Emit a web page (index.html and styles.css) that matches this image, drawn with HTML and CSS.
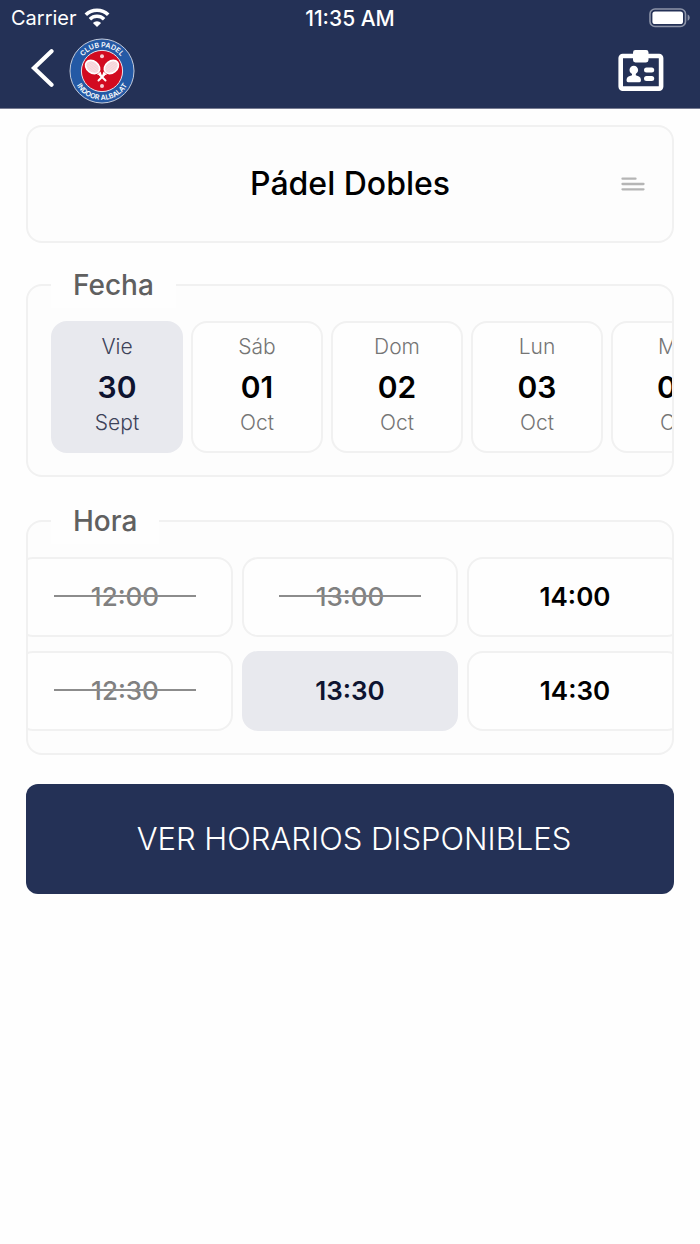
FILE: index.html
```html
<!DOCTYPE html>
<html lang="es">
<head>
<meta charset="utf-8">
<meta name="viewport" content="width=device-width, initial-scale=1">
<title>Reserva de pista</title>
<link rel="stylesheet" href="styles.css">
</head>
<body>
<header class="header">
  <div class="status">
    <div class="status-left">
      <span>Carrier</span>
      <svg class="wifi" viewBox="0 0 26 20" aria-hidden="true">
        <path d="M1.8 6.8a16 16 0 0 1 22.4 0" fill="none" stroke="#fff" stroke-width="3.6"/>
        <path d="M5.9 11.2a10 10 0 0 1 14.2 0" fill="none" stroke="#fff" stroke-width="3.4"/>
        <path d="M8.9 14.9a5.8 5.8 0 0 1 8.2 0L13 19z" fill="#fff"/>
      </svg>
    </div>
    <span class="clock">11:35 AM</span>
    <svg class="battery" viewBox="0 0 42 20" aria-hidden="true">
      <rect x="1" y="1" width="35.5" height="17.5" rx="5" fill="none" stroke="#8d94a8" stroke-width="1.6"/>
      <rect x="3.4" y="3.4" width="30.6" height="12.6" rx="2.6" fill="#fff"/>
      <path d="M38.6 6.6c2.8 1.2 2.8 5 0 6.200z" fill="#8d94a8"/>
    </svg>
  </div>
  <div class="nav">
    <button class="icon-button" type="button" aria-label="Volver">
      <svg class="back" viewBox="0 0 24 46" aria-hidden="true"><path d="M21.500 3.200 4 20l17.500 16.800" fill="none" stroke="#fff" stroke-width="4.200" stroke-linecap="round" stroke-linejoin="miter"/></svg>
    </button>
    <svg class="logo" viewBox="0 0 66 66" role="img" aria-label="Club Padel Indoor Albalat">
      <defs>
        <path id="arc-top" d="M9.300 33a23.700 23.700 0 0 1 47.400 0"/>
        <path id="arc-bottom" d="M4 33a29 29 0 0 0 58 0"/>
        <pattern id="strings" width="2" height="2" patternUnits="userSpaceOnUse"><rect width="2" height="2" fill="#fff"/><circle cx="1" cy="1" r=".5" fill="#d8304a"/></pattern>
        <g id="racket">
          <ellipse cx="23.600" cy="29" rx="8.600" ry="6.600" transform="rotate(38 23.600 29)" fill="#fff"/>
          <ellipse cx="23.600" cy="29" rx="7" ry="5" transform="rotate(38 23.600 29)" fill="url(#strings)"/>
          <path d="M28 36.500 31.500 33.500 33 38z" fill="#fff"/>
          <path d="M31 37 36.500 42.500" stroke="#fff" stroke-width="2" stroke-linecap="round"/>
        </g>
      </defs>
      <circle cx="33" cy="33" r="32" fill="#2459a5" stroke="#c3cbdc" stroke-width="1"/>
      <circle cx="33" cy="33" r="20.600" fill="#d20a20" stroke="#e8e3ec" stroke-width="1"/>
      <use href="#racket"/>
      <use href="#racket" transform="translate(66 0) scale(-1 1)"/>
      <g fill="#f6cdd2"><circle cx="33" cy="18.200" r="2"/><circle cx="33" cy="48" r="2"/></g>
      <g class="logo-text">
        <text><textPath href="#arc-top" startOffset="50%">CLUB PADEL</textPath></text>
        <text><textPath href="#arc-bottom" startOffset="50%">INDOOR ALBALAT</textPath></text>
      </g>
    </svg>
    <button class="icon-button nav-end" type="button" aria-label="Mi carnet">
      <svg class="badge" viewBox="0 0 46 42" aria-hidden="true">
        <rect x="2.700" y="6" width="40.400" height="32.600" rx="2" fill="none" stroke="#fff" stroke-width="4.600"/>
        <rect x="15" y="0" width="15.500" height="12.500" rx="2.400" fill="#fff"/>
        <circle cx="15.800" cy="20" r="4.300" fill="#fff"/>
        <path d="M14 22h3.800v3.300l3.200 1.300q1.900.9 1.900 3v1.200q0 1.400-1.400 1.400H10q-1.400 0-1.400-1.400v-1.200q0-2.100 1.900-3l3.500-1.300z" fill="#fff"/>
        <rect x="26" y="17.600" width="10.200" height="5" rx="2.500" fill="#fff"/>
        <rect x="26" y="26" width="10.200" height="5" rx="2.500" fill="#fff"/>
      </svg>
    </button>
  </div>
</header>

<main class="main">
  <button class="sport" type="button">
    <span class="sport-name">Pádel Dobles</span>
    <svg class="lines" viewBox="0 0 24 14" aria-hidden="true"><path d="M1.500 1.700h13M1.500 7h21M1.500 12.300h21" stroke="#b5b5b5" stroke-width="2.300" stroke-linecap="round"/></svg>
  </button>

  <fieldset class="group">
    <legend class="group-title">Fecha</legend>
    <div class="days">
      <button class="option day selected" type="button" aria-pressed="true"><span>Vie</span><strong>30</strong><span>Sept</span></button>
      <button class="option day" type="button"><span>Sáb</span><strong>01</strong><span>Oct</span></button>
      <button class="option day" type="button"><span>Dom</span><strong>02</strong><span>Oct</span></button>
      <button class="option day" type="button"><span>Lun</span><strong>03</strong><span>Oct</span></button>
      <button class="option day" type="button"><span>Mar</span><strong>04</strong><span>Oct</span></button>
    </div>
  </fieldset>

  <fieldset class="group">
    <legend class="group-title">Hora</legend>
    <div class="times">
      <button class="option time" type="button" disabled>12:00</button>
      <button class="option time" type="button" disabled>13:00</button>
      <button class="option time" type="button">14:00</button>
      <button class="option time" type="button" disabled>12:30</button>
      <button class="option time selected" type="button" aria-pressed="true">13:30</button>
      <button class="option time" type="button">14:30</button>
    </div>
  </fieldset>

  <button class="submit" type="button">VER HORARIOS DISPONIBLES</button>
</main>
</body>
</html>
```
FILE: styles.css
```css
* { box-sizing: border-box; }

body {
  margin: 0;
  background: #fefefe;
  color: #000;
  font-family: Inter, "Liberation Sans", sans-serif;
}

button {
  margin: 0;
  padding: 0;
  border: 0;
  background: none;
  color: inherit;
  font: inherit;
}

svg { display: block; }

.header {
  background: #243156;
  border-bottom: 1px solid #777b91;
  color: #fff;
}

.status {
  display: grid;
  grid-template-columns: 1fr auto 1fr;
  align-items: center;
  height: 36px;
  padding: 0 9px;
  font-size: 20px;
}

.status-left {
  display: flex;
  align-items: center;
  gap: 7px;
  padding-left: 2px;
}

.wifi { width: 26px; height: 20px; }
.clock { font-size: 21px; font-weight: 500; }
.battery { width: 42px; height: 20px; justify-self: end; }

.nav {
  display: flex;
  align-items: center;
  height: 72px;
  padding: 0 36px 2px 30px;
}

.icon-button { cursor: pointer; }
.back { width: 24px; height: 46px; }
.logo { width: 66px; height: 66px; margin-left: 15px; }
.nav-end { margin-left: auto; }
.badge { width: 46px; height: 42px; }

.logo-text {
  fill: #fff;
  font-size: 7px;
  font-weight: 600;
  text-anchor: middle;
}

.main {
  display: flex;
  flex-direction: column;
  padding: 16px 26px;
}

.sport {
  display: grid;
  grid-template-columns: 1fr auto 1fr;
  align-items: center;
  height: 118px;
  padding: 0 27px;
  border: 2px solid #f1f1f1;
  border-radius: 16px;
  background: #fdfdfd;
}

.sport-name {
  grid-column: 2;
  padding-bottom: 2px;
  font-size: 32px;
  font-weight: 500;
}

.lines { width: 24px; height: 14px; justify-self: end; }

.group {
  min-width: 0;
  margin: 19px 0 0;
  padding: 13px 0 22px;
  border: 2px solid #f1f1f1;
  border-radius: 16px;
  background: #fdfdfd;
}

.group + .group { margin-top: 21px; }

.group-title {
  margin-left: 23px;
  padding: 0 22px;
  background: #fefefe;
  color: #606060;
  font-size: 28px;
  font-weight: 500;
  line-height: 46px;
}

.option {
  border: 2px solid #f1f1f1;
  border-radius: 16px;
  background: #fefefe;
}

.selected {
  border-color: #e8e9ee;
  background: #e8e9ee;
  color: #0e1430;
}

.days {
  display: flex;
  gap: 8px;
  padding-left: 23px;
  overflow: hidden;
}

.day {
  display: flex;
  flex: 0 0 132px;
  flex-direction: column;
  align-items: center;
  height: 132px;
  padding-top: 10px;
  font-size: 21px;
  font-weight: 300;
  line-height: 28px;
}

.day span { color: #757575; }
.day.selected span { color: #3d4259; }

.day strong {
  margin-top: 4px;
  font-size: 30px;
  font-weight: 600;
  line-height: 44px;
}

.times {
  display: grid;
  grid-template-columns: repeat(3, 216px);
  justify-content: center;
  gap: 14px 9px;
  overflow: hidden;
}

.time {
  position: relative;
  height: 80px;
  padding-bottom: 2px;
  font-size: 26px;
  font-weight: 600;
}

.time:disabled { color: #808080; font-weight: 500; }

.time:disabled::after {
  content: "";
  position: absolute;
  top: 36px;
  right: 35px;
  left: 35px;
  height: 2px;
  background: #8c8c8c;
}

.submit {
  height: 110px;
  margin-top: 29px;
  padding: 0 0 2px 8px;
  border-radius: 12px;
  background: #243156;
  color: #fff;
  font-size: 31px;
  font-weight: 300;
}
```
